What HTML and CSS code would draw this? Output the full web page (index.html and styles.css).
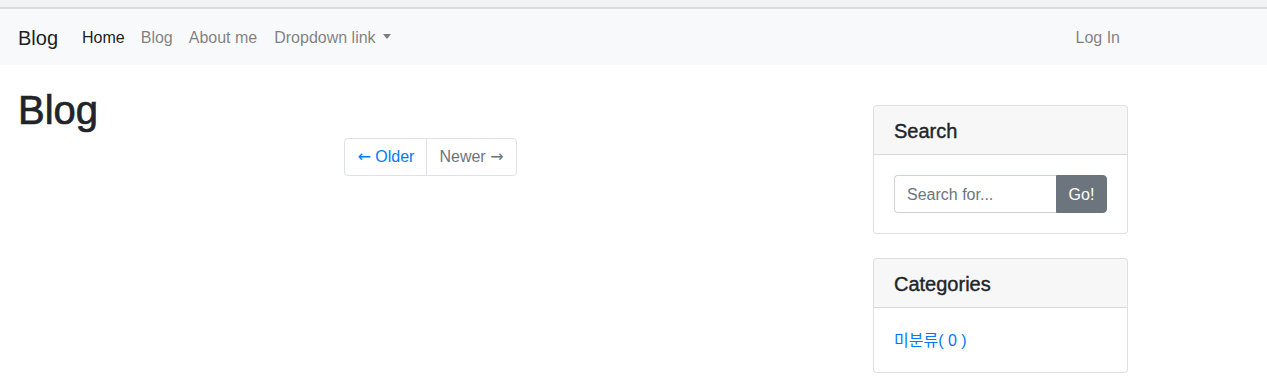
FILE: index.html
```html
<!DOCTYPE html>
<html lang="ko">
<head>
<meta charset="utf-8">
<title>Blog</title>
<link rel="stylesheet" href="styles.css">
</head>
<body>
<div class="topstrip"></div>
<nav class="navbar">
  <div class="navbar-inner">
    <a class="brand" href="#">Blog</a>
    <ul class="nav">
      <li><a class="nav-link active" href="#">Home</a></li>
      <li><a class="nav-link" href="#">Blog</a></li>
      <li><a class="nav-link" href="#">About me</a></li>
      <li><a class="nav-link dropdown" href="#">Dropdown link<span class="caret"></span></a></li>
    </ul>
    <ul class="nav nav-right">
      <li><a class="nav-link" href="#">Log In</a></li>
    </ul>
  </div>
</nav>
<div class="page">
  <main class="main-col">
    <h1 class="title">Blog</h1>
    <ul class="pagination">
      <li><a class="page-link" href="#"><span class="arrow">&larr;</span> Older</a></li>
      <li><span class="page-link disabled">Newer <span class="arrow">&rarr;</span></span></li>
    </ul>
  </main>
  <aside class="side-col">
    <div class="card">
      <h5 class="card-header">Search</h5>
      <div class="card-body">
        <div class="input-group">
          <input class="form-control" type="text" placeholder="Search for...">
          <button class="btn" type="button">Go!</button>
        </div>
      </div>
    </div>
    <div class="card">
      <h5 class="card-header">Categories</h5>
      <div class="card-body">
        <ul class="cat-list">
          <li><a href="#">미분류( 0 )</a></li>
        </ul>
      </div>
    </div>
  </aside>
</div>
</body>
</html>
```
FILE: styles.css
```css
* { box-sizing: border-box; }
html, body { margin: 0; padding: 0; }
body {
  font-family: "Liberation Sans", Arial, "Noto Sans CJK KR", sans-serif;
  font-size: 16px;
  line-height: 1.5;
  color: #212529;
  background: #fff;
}
a { text-decoration: none; }
ul { list-style: none; margin: 0; padding: 0; }

.topstrip {
  height: 9px;
  background: #f1f3f4;
  border-bottom: 2px solid #dcdcdc;
}

.navbar {
  background: #f8f9fa;
  height: 56px;
}
.navbar-inner {
  width: 1144px;
  height: 56px;
  padding: 9px 16px 7px;
  display: flex;
  align-items: center;
}
.brand {
  font-size: 20px;
  line-height: 30px;
  padding: 5px 0;
  margin-left: 2px;
  margin-right: 16px;
  color: rgba(0,0,0,.9);
}
.nav { display: flex; }
.nav-right { margin-left: auto; }
.nav-link {
  display: block;
  padding: 8px 8px;
  color: rgba(0,0,0,.5);
  line-height: 24px;
}
.dropdown { margin-left: 1px; }
.nav-link.active { color: rgba(0,0,0,.9); }
.caret {
  display: inline-block;
  margin-left: 7px;
  vertical-align: 4px;
  border-top: 5px solid;
  border-right: 4.5px solid transparent;
  border-left: 4.5px solid transparent;
}

.page {
  width: 1144px;
  padding: 0 16px;
  display: flex;
  gap: 28px;
  align-items: flex-start;
}
.main-col { width: 829px; }
.side-col { width: 255px; }

.title {
  font-size: 40px;
  font-weight: 500;
  line-height: 1.2;
  margin: 21px 0 4px 2px;
  -webkit-text-stroke: 0.7px #212529;
}

.pagination {
  display: flex;
  justify-content: center;
}
.page-link {
  display: block;
  height: 38px;
  padding: 8px 12px;
  line-height: 20px;
  border: 1px solid #dee2e6;
  color: #007bff;
  white-space: nowrap;
}
.arrow {
  font-family: "DejaVu Sans", sans-serif;
  font-size: 16px;
  line-height: 20px;
}
.pagination li:first-child .page-link {
  border-radius: 4px 0 0 4px;
}
.pagination li:last-child .page-link {
  border-radius: 0 4px 4px 0;
  margin-left: -1px;
}
.page-link.disabled { color: #6c757d; }

.card {
  margin-top: 40px;
  border: 1px solid rgba(0,0,0,.125);
  border-radius: 4px;
  background: #fff;
}
.card + .card { margin-top: 24px; }
.card-header {
  margin: 0;
  padding: 13px 20px 11px;
  font-size: 20px;
  font-weight: 500;
  line-height: 24px;
  background: rgba(0,0,0,.03);
  border-bottom: 1px solid rgba(0,0,0,.125);
  border-radius: 3px 3px 0 0;
  -webkit-text-stroke: 0.4px #212529;
}
.card-body { padding: 20px; }

.input-group { display: flex; }
.form-control {
  flex: 1;
  min-width: 0;
  height: 38px;
  padding: 7px 12px 5px;
  font: inherit;
  color: #495057;
  border: 1px solid #ced4da;
  border-right: 0;
  border-radius: 4px 0 0 4px;
  outline: none;
}
.form-control::placeholder { color: #6c757d; opacity: 1; }
.btn {
  width: 51px;
  height: 38px;
  padding: 7px 0 5px;
  font: inherit;
  color: #fff;
  background: #6c757d;
  border: 1px solid #6c757d;
  border-radius: 0 4px 4px 0;
}

.cat-list { padding-top: 1px; margin-bottom: -1px; }
.cat-list a {
  color: #007bff;
  font-family: "Liberation Sans", "Noto Sans CJK KR", sans-serif;
}
```
